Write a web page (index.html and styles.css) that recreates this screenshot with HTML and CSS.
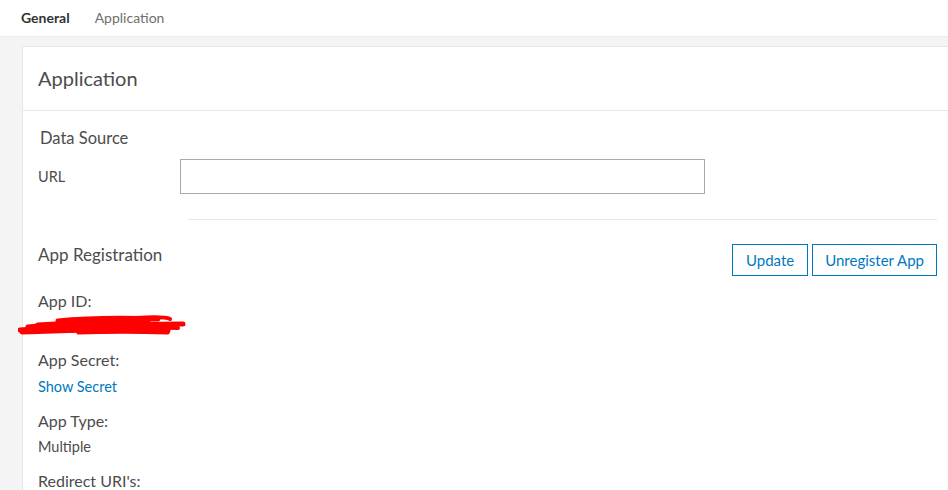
FILE: index.html
```html
<!DOCTYPE html>
<html>
<head>
<meta charset="utf-8">
<link rel="stylesheet" href="styles.css">
</head>
<body>
<nav class="tabs">
  <span class="tab active">General</span>
  <span class="tab">Application</span>
</nav>
<main class="main">
  <section class="card">
    <header class="card-header">Application</header>
    <div class="card-body">
      <div class="group-title">Data Source</div>
      <div class="field-row">
        <label class="field-label">URL</label>
        <input class="text-input" type="text">
      </div>
      <hr class="divider">
      <div class="reg-row">
        <div class="reg-title">App Registration</div>
        <div class="btns">
          <button class="btn btn-update">Update</button>
          <button class="btn">Unregister App</button>
        </div>
      </div>
      <div class="prop first">
        <div class="prop-label">App ID:</div>
        <div class="redact">
          <svg width="168" height="22" viewBox="0 0 168 22">
            <g stroke="#ff0000" fill="none" stroke-linecap="round">
              <path d="M2 16 C40 13 80 12 120 11 C140 10 155 10 165 10" stroke-width="5"/>
              <path d="M10 13 C50 9 90 8 130 8 M40 7 C70 4 110 4 140 5" stroke-width="5"/>
              <path d="M4 18 C50 16 100 15 150 17 M20 11 C60 8 110 9 150 12" stroke-width="5"/>
              <path d="M118 4 C135 3 148 3 152 5 M12 15 C60 13 120 13 160 14" stroke-width="4"/>
              <path d="M60 19 C90 18 120 18 150 19" stroke-width="3"/>
            </g>
          </svg>
        </div>
      </div>
      <div class="prop">
        <div class="prop-label">App Secret:</div>
        <a class="link">Show Secret</a>
      </div>
      <div class="prop">
        <div class="prop-label">App Type:</div>
        <div class="prop-value">Multiple</div>
      </div>
      <div class="prop">
        <div class="prop-label">Redirect URI's:</div>
      </div>
    </div>
  </section>
</main>
</body>
</html>
```
FILE: styles.css
```css
html, body {
  margin: 0;
  padding: 0;
  height: 100%;
  overflow: hidden;
}
body {
  background: #f4f4f4;
  font-family: Lato, "Open Sans", sans-serif;
  color: #4c4c4c;
}
.tabs {
  display: flex;
  align-items: center;
  gap: 25px;
  height: 37px;
  padding-left: 21px;
  padding-bottom: 1px;
  background: #fff;
  border-bottom: 1px solid #ebebeb;
  box-sizing: border-box;
}
.tab {
  font-size: 14px;
  color: #6e6e6e;
}
.tab.active {
  color: #323232;
  font-weight: 700;
}
.main {
  padding: 9px 0 0 22px;
  margin-right: -2px;
}
.card {
  background: #fff;
  border: 1px solid #e6e6e6;
  min-height: 500px;
}
.card-header {
  height: 64px;
  box-sizing: border-box;
  padding: 19px 0 0 15px;
  font-size: 20px;
  line-height: 24px;
  color: #4c4c4c;
  border-bottom: 1px solid #e8e8e8;
}
.card-body {
  padding: 17px 12px 0 15px;
}
.group-title {
  font-size: 16.5px;
  padding-left: 2px;
  line-height: 20px;
}
.field-row {
  display: flex;
  align-items: center;
  margin-top: 11px;
}
.field-label {
  width: 142px;
  font-size: 14.5px;
}
.text-input {
  width: 525px;
  height: 35px;
  box-sizing: border-box;
  border: 1px solid #aaaaaa;
  margin: 0;
  padding: 0 8px;
}
.divider {
  border: 0;
  border-top: 1px solid #e8e8e8;
  margin: 25px 0 0 150px;
}
.reg-row {
  display: flex;
  justify-content: space-between;
  align-items: flex-start;
  margin-top: 24px;
}
.reg-title {
  font-size: 17px;
  line-height: 20px;
  margin-top: 1px;
}
.btns {
  display: flex;
  gap: 4px;
}
.btn {
  background: #fff;
  border: 1px solid #0079c1;
  color: #0079c1;
  font-family: inherit;
  font-size: 15px;
  height: 32px;
  padding: 0 12px;
  margin: 0;
}
.btn-update {
  padding: 0 13px;
}
.prop {
  margin-top: 14px;
}
.prop.first {
  margin-top: 15px;
}
.prop-label {
  font-size: 16px;
  line-height: 20px;
}
.prop-value {
  font-size: 14.5px;
  margin-top: 6px;
  line-height: 20px;
}
.link {
  display: block;
  color: #0079c1;
  font-size: 14.5px;
  margin-top: 7px;
  line-height: 20px;
}
.redact {
  margin-left: -20px;
  height: 25px;
  padding-top: 3px;
  box-sizing: border-box;
}
.redact svg {
  display: block;
}
```
